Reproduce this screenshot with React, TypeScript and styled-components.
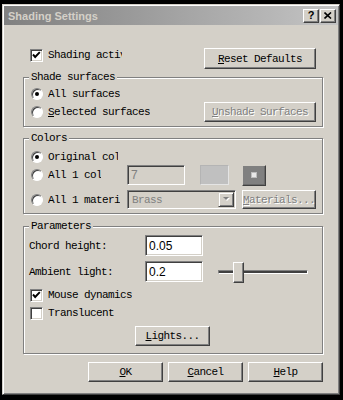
import React from 'react'
import styled, { createGlobalStyle } from 'styled-components'

const FACE = '#d4d0c8'

const GlobalStyle = createGlobalStyle`
  html, body {
    margin: 0;
    padding: 0;
    background: #000;
  }
  body {
    font-family: "Liberation Mono", "DejaVu Sans Mono", monospace;
    font-size: 11px;
    letter-spacing: -0.6px;
    color: #000;
  }
`

const App = () => {
  return (
    <>
      <GlobalStyle />
      <Screen>
        <Window>
          <TitleBar>
            <TitleText>Shading Settings</TitleText>
            <CaptionButton>?</CaptionButton>
            <CaptionButton>
              <svg width="8" height="7" viewBox="0 0 8 7">
                <path d="M0.5 0.5 L7 6.5 M7 0.5 L0.5 6.5" stroke="#000" strokeWidth="1.6" />
              </svg>
            </CaptionButton>
          </TitleBar>

          <Body>
            <TopRow>
              <CheckItem>
                <CheckBox checked />
                <Label w={74}>Shading active</Label>
              </CheckItem>
              <Button w={112} h={21} push>
                <U>R</U>eset Defaults
              </Button>
            </TopRow>

            <Group mt={2}>
              <Legend>Shade surfaces</Legend>
              <GroupBody pad="3px 6px 4px 7px">
                <Row h={16}>
                  <RadioItem>
                    <Radio checked />
                    <Label>All surfaces</Label>
                  </RadioItem>
                </Row>
                <Row h={20}>
                  <RadioItem>
                    <Radio />
                    <Label>
                      <U>S</U>elected surfaces
                    </Label>
                  </RadioItem>
                  <Button w={112} h={20} disabled push>
                    <U>U</U>nshade Surfaces
                  </Button>
                </Row>
              </GroupBody>
            </Group>

            <Group mt={5}>
              <Legend>Colors</Legend>
              <GroupBody pad="5px 6px 3px 7px">
                <Row h={16}>
                  <Lead>
                    <RadioItem>
                      <Radio checked />
                      <Label w={70}>Original colors</Label>
                    </RadioItem>
                  </Lead>
                </Row>
                <Row h={20}>
                  <Lead>
                    <RadioItem>
                      <Radio />
                      <Label w={53}>All 1 color</Label>
                    </RadioItem>
                  </Lead>
                  <Edit w={58} h={20} disabled>7</Edit>
                  <Swatch />
                  <ColorButton>
                    <ColorDot />
                  </ColorButton>
                </Row>
                <Row h={21} mt={4}>
                  <Lead>
                    <RadioItem>
                      <Radio />
                      <Label w={72}>All 1 material</Label>
                    </RadioItem>
                  </Lead>
                  <Combo>
                    <ComboText>Brass</ComboText>
                    <DropButton>
                      <svg width="7" height="5" viewBox="0 0 7 5">
                        <path d="M1 1 L7 1 L4 4 Z" fill="#fff" />
                        <path d="M0 0 L6 0 L3 3 Z" fill="#808080" />
                      </svg>
                    </DropButton>
                  </Combo>
                  <Button w={74} h={19} disabled push>
                    <U>M</U>aterials...
                  </Button>
                </Row>
              </GroupBody>
            </Group>

            <Group mt={6}>
              <Legend>Parameters</Legend>
              <GroupBody pad="3px 6px 7px 5px">
                <Row h={21}>
                  <FieldLabel>Chord height:</FieldLabel>
                  <Edit w={58} h={21}>0.05</Edit>
                </Row>
                <Row h={21} mt={5}>
                  <FieldLabel>Ambient light:</FieldLabel>
                  <Edit w={58} h={21}>0.2</Edit>
                  <Slider>
                    <Track />
                    <Thumb style={{ left: 15 }} />
                  </Slider>
                </Row>
                <Row h={16} mt={5}>
                  <CheckItem indent>
                    <CheckBox checked />
                    <Label>Mouse dynamics</Label>
                  </CheckItem>
                </Row>
                <Row h={16} mt={2}>
                  <CheckItem indent>
                    <CheckBox />
                    <Label>Translucent</Label>
                  </CheckItem>
                </Row>
                <Row h={20} mt={5} center>
                  <Button w={75} h={20}>
                    <U>L</U>ights...
                  </Button>
                </Row>
              </GroupBody>
            </Group>

            <Footer>
              <Button w={75} h={20}>
                <U>O</U>K
              </Button>
              <Button w={75} h={20}>
                <U>C</U>ancel
              </Button>
              <Button w={75} h={20}>
                <U>H</U>elp
              </Button>
            </Footer>
          </Body>
        </Window>
      </Screen>
    </>
  )
}

export default App

const CheckBox = ({ checked }: { checked?: boolean }) => (
  <Box>
    {checked && (
      <svg width="11" height="11" viewBox="0 0 11 11">
        <path d="M2 4.5 L4.2 7 L8.8 2.2" fill="none" stroke="#000" strokeWidth="1.9" />
      </svg>
    )}
  </Box>
)

const Screen = styled.div`
  width: 343px;
  height: 400px;
  box-sizing: border-box;
  padding: 4px 3px 5px 2px;
  background: #000;
`
const Window = styled.div`
  height: 100%;
  box-sizing: border-box;
  background: ${FACE};
  border: 1px solid;
  border-color: ${FACE} #404040 #404040 ${FACE};
  box-shadow: inset 1px 1px #fff, inset -1px -1px #808080;
  padding: 1px;
  display: flex;
  flex-direction: column;
`
const TitleBar = styled.div`
  height: 19px;
  display: flex;
  align-items: center;
  padding: 0 2px 0 4px;
  background: linear-gradient(to right, #808080, #c4c4c4);
`
const TitleText = styled.div`
  flex: 1;
  font-family: "Liberation Sans", Arial, sans-serif;
  font-weight: bold;
  font-size: 11px;
  letter-spacing: 0;
  color: ${FACE};
`
const CaptionButton = styled.div`
  width: 16px;
  height: 14px;
  box-sizing: border-box;
  display: flex;
  align-items: center;
  justify-content: center;
  background: ${FACE};
  border: 1px solid;
  border-color: #fff #404040 #404040 #fff;
  box-shadow: inset -1px -1px #808080;
  font-family: "Liberation Sans", Arial, sans-serif;
  font-weight: bold;
  font-size: 11px;
  letter-spacing: 0;
  line-height: 1;
  &:last-child {
    margin-left: 1px;
  }
`
const Body = styled.div`
  padding: 23px 0 0 19px;
`
const TopRow = styled.div`
  width: 300px;
  height: 21px;
  box-sizing: border-box;
  padding: 0 7px 0 7px;
  display: flex;
  align-items: flex-start;
`
const Group = styled.fieldset<{ mt: number }>`
  width: 300px;
  box-sizing: border-box;
  min-width: 0;
  margin: ${p => p.mt}px 0 0 0;
  padding: 0;
  border: 1px solid #808080;
  box-shadow: inset 1px 1px #fff, 1px 1px #fff;
`
const Legend = styled.legend`
  margin-left: 5px;
  padding: 0 2px;
  line-height: 12px;
  background: ${FACE};
`
const GroupBody = styled.div<{ pad: string }>`
  padding: ${p => p.pad};
`
const Row = styled.div<{ h: number; mt?: number; center?: boolean }>`
  height: ${p => p.h}px;
  margin-top: ${p => p.mt || 0}px;
  display: flex;
  align-items: center;
  justify-content: ${p => (p.center ? 'center' : 'flex-start')};
`
const Lead = styled.div`
  width: 96px;
  flex: none;
`
const CheckItem = styled.div<{ indent?: boolean }>`
  display: flex;
  align-items: center;
  gap: 5px;
  margin-left: ${p => (p.indent ? 1 : 0)}px;
`
const RadioItem = styled.div`
  display: flex;
  align-items: center;
  gap: 5px;
`
const Label = styled.span<{ w?: number }>`
  white-space: nowrap;
  overflow: hidden;
  line-height: 14px;
  ${p => (p.w ? `width: ${p.w}px;` : '')}
`
const FieldLabel = styled.span`
  width: 116px;
  flex: none;
  white-space: nowrap;
`
const U = styled.span`
  text-decoration: underline;
`
const Box = styled.div`
  width: 13px;
  height: 13px;
  flex: none;
  box-sizing: border-box;
  background: #fff;
  border: 1px solid;
  border-color: #808080 #fff #fff #808080;
  box-shadow: inset 1px 1px #404040, inset -1px -1px ${FACE};
  display: flex;
  align-items: center;
  justify-content: center;
`
const Radio = styled.div<{ checked?: boolean }>`
  width: 12px;
  height: 12px;
  flex: none;
  box-sizing: border-box;
  border-radius: 50%;
  background: #fff;
  border: 1px solid;
  border-color: #808080 #fff #fff #808080;
  box-shadow: inset 1px 1px #404040;
  display: flex;
  align-items: center;
  justify-content: center;
  &::after {
    content: '';
    width: 4px;
    height: 4px;
    border-radius: 50%;
    background: ${p => (p.checked ? '#000' : 'transparent')};
  }
`
const Button = styled.div<{ w: number; h: number; disabled?: boolean; push?: boolean }>`
  width: ${p => p.w}px;
  height: ${p => p.h}px;
  flex: none;
  box-sizing: border-box;
  display: flex;
  align-items: center;
  justify-content: center;
  white-space: nowrap;
  background: ${FACE};
  border: 1px solid;
  border-color: #fff #404040 #404040 #fff;
  box-shadow: inset -1px -1px #808080;
  color: ${p => (p.disabled ? '#808080' : '#000')};
  text-shadow: ${p => (p.disabled ? '1px 1px #fff' : 'none')};
  margin-left: ${p => (p.push ? 'auto' : '0')};
`
const Edit = styled.div<{ w: number; h: number; disabled?: boolean }>`
  width: ${p => p.w}px;
  height: ${p => p.h}px;
  flex: none;
  box-sizing: border-box;
  padding: 0 3px;
  display: flex;
  align-items: center;
  background: ${p => (p.disabled ? FACE : '#fff')};
  color: ${p => (p.disabled ? '#808080' : '#000')};
  border: 1px solid;
  border-color: #808080 #fff #fff #808080;
  box-shadow: inset 1px 1px #404040, inset -1px -1px ${FACE};
  font-family: "Liberation Sans", Arial, sans-serif;
  font-size: 12px;
  letter-spacing: 0;
`
const Swatch = styled.div`
  width: 29px;
  height: 20px;
  flex: none;
  box-sizing: border-box;
  background: #c0c0c0;
  border: 1px solid;
  border-color: #b4b4b4 #e4e4e4 #e4e4e4 #b4b4b4;
  margin: 0 13px 0 15px;
`
const ColorButton = styled.div`
  width: 24px;
  height: 21px;
  flex: none;
  box-sizing: border-box;
  display: flex;
  align-items: center;
  justify-content: center;
  background: #808080;
  border: 1px solid;
  border-color: ${FACE} #404040 #404040 ${FACE};
  box-shadow: inset -1px -1px #6a6a6a;
`
const ColorDot = styled.div`
  width: 4px;
  height: 4px;
  background: #e8e8e8;
  border: 1px solid #bdbdbd;
`
const Combo = styled.div`
  width: 109px;
  height: 19px;
  flex: none;
  box-sizing: border-box;
  display: flex;
  align-items: stretch;
  background: ${FACE};
  border: 1px solid;
  border-color: #808080 #fff #fff #808080;
  box-shadow: inset 1px 1px #404040, inset -1px -1px ${FACE};
  padding: 1px;
`
const ComboText = styled.div`
  flex: 1;
  display: flex;
  align-items: center;
  padding-left: 3px;
  color: #808080;
`
const DropButton = styled.div`
  width: 16px;
  flex: none;
  box-sizing: border-box;
  display: flex;
  align-items: center;
  justify-content: center;
  background: ${FACE};
  border: 1px solid;
  border-color: ${FACE} #404040 #404040 ${FACE};
  box-shadow: inset 1px 1px #fff, inset -1px -1px #808080;
`
const Slider = styled.div`
  position: relative;
  width: 90px;
  height: 21px;
  flex: none;
  margin: 1px 0 0 15px;
  display: flex;
  align-items: center;
`
const Track = styled.div`
  width: 100%;
  height: 4px;
  box-sizing: border-box;
  border: 1px solid;
  border-color: #808080 #fff #fff #808080;
  background: #404040;
`
const Thumb = styled.div`
  position: absolute;
  top: 0;
  width: 11px;
  height: 21px;
  box-sizing: border-box;
  background: ${FACE};
  border: 1px solid;
  border-color: #fff #404040 #404040 #fff;
  box-shadow: inset -1px -1px #808080;
`
const Footer = styled.div`
  width: 300px;
  margin-top: 8px;
  display: flex;
  justify-content: flex-end;
  gap: 5px;
`
